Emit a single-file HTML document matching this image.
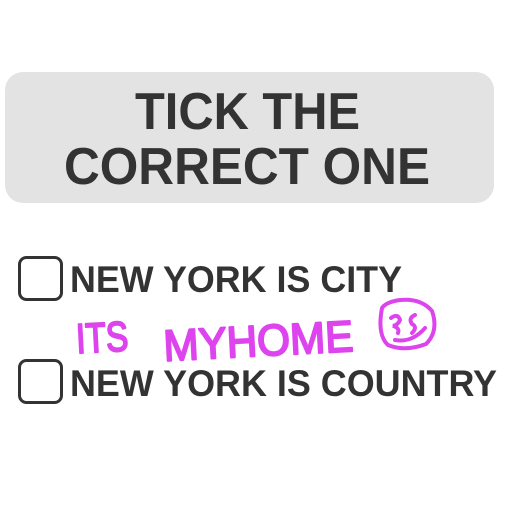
<!DOCTYPE html>
<html><head><style>html,body{margin:0;padding:0;background:#fff;width:512px;height:512px;overflow:hidden}</style></head>
<body>
<svg width="512" height="512" viewBox="0 0 512 512" xmlns="http://www.w3.org/2000/svg">
<rect x="5" y="72" width="489" height="131" rx="18" fill="#e3e3e3"/>
<g font-family="Liberation Sans, sans-serif" font-weight="bold" fill="#333">
<text x="135" y="129" font-size="52" textLength="225" lengthAdjust="spacingAndGlyphs">TICK THE</text>
<text x="64" y="184" font-size="52" textLength="366" lengthAdjust="spacingAndGlyphs">CORRECT ONE</text>
<text x="70" y="292" font-size="37" textLength="332" lengthAdjust="spacingAndGlyphs">NEW YORK IS CITY</text>
<text x="70" y="396" font-size="37" textLength="427" lengthAdjust="spacingAndGlyphs">NEW YORK IS COUNTRY</text>
</g>
<rect x="19.5" y="257.5" width="42" height="42" rx="7" fill="none" stroke="#333" stroke-width="3"/>
<rect x="19.5" y="360.5" width="42" height="42" rx="7" fill="none" stroke="#333" stroke-width="3"/>
<g font-family="Liberation Sans Narrow, Liberation Sans, sans-serif" fill="#dd44ee" stroke="#dd44ee" stroke-width="2" stroke-linejoin="round">
<text x="76" y="352" font-size="42" textLength="52" lengthAdjust="spacingAndGlyphs" transform="rotate(-3 100 335)">ITS</text>
<text x="163" y="356" font-size="44" textLength="190" lengthAdjust="spacingAndGlyphs" transform="rotate(-3 258 335)">MYHOME</text>
</g>
<g fill="none" stroke="#dd44ee" stroke-width="4" stroke-linecap="round">
<path d="M382 308 Q377 335 388 345 Q405 352 426 344 Q439 331 432 311 Q421 298 400 300 Q386 302 382 308 Z"/>
<path d="M391 318 Q398 313 400 320 Q398 325 393 326 Q400 328 398 333"/>
<path d="M415 315 Q408 318 412 324 Q418 327 412 333"/>
<path d="M395 340 Q412 343 425 328"/>
</g>
</svg>
</body></html>
